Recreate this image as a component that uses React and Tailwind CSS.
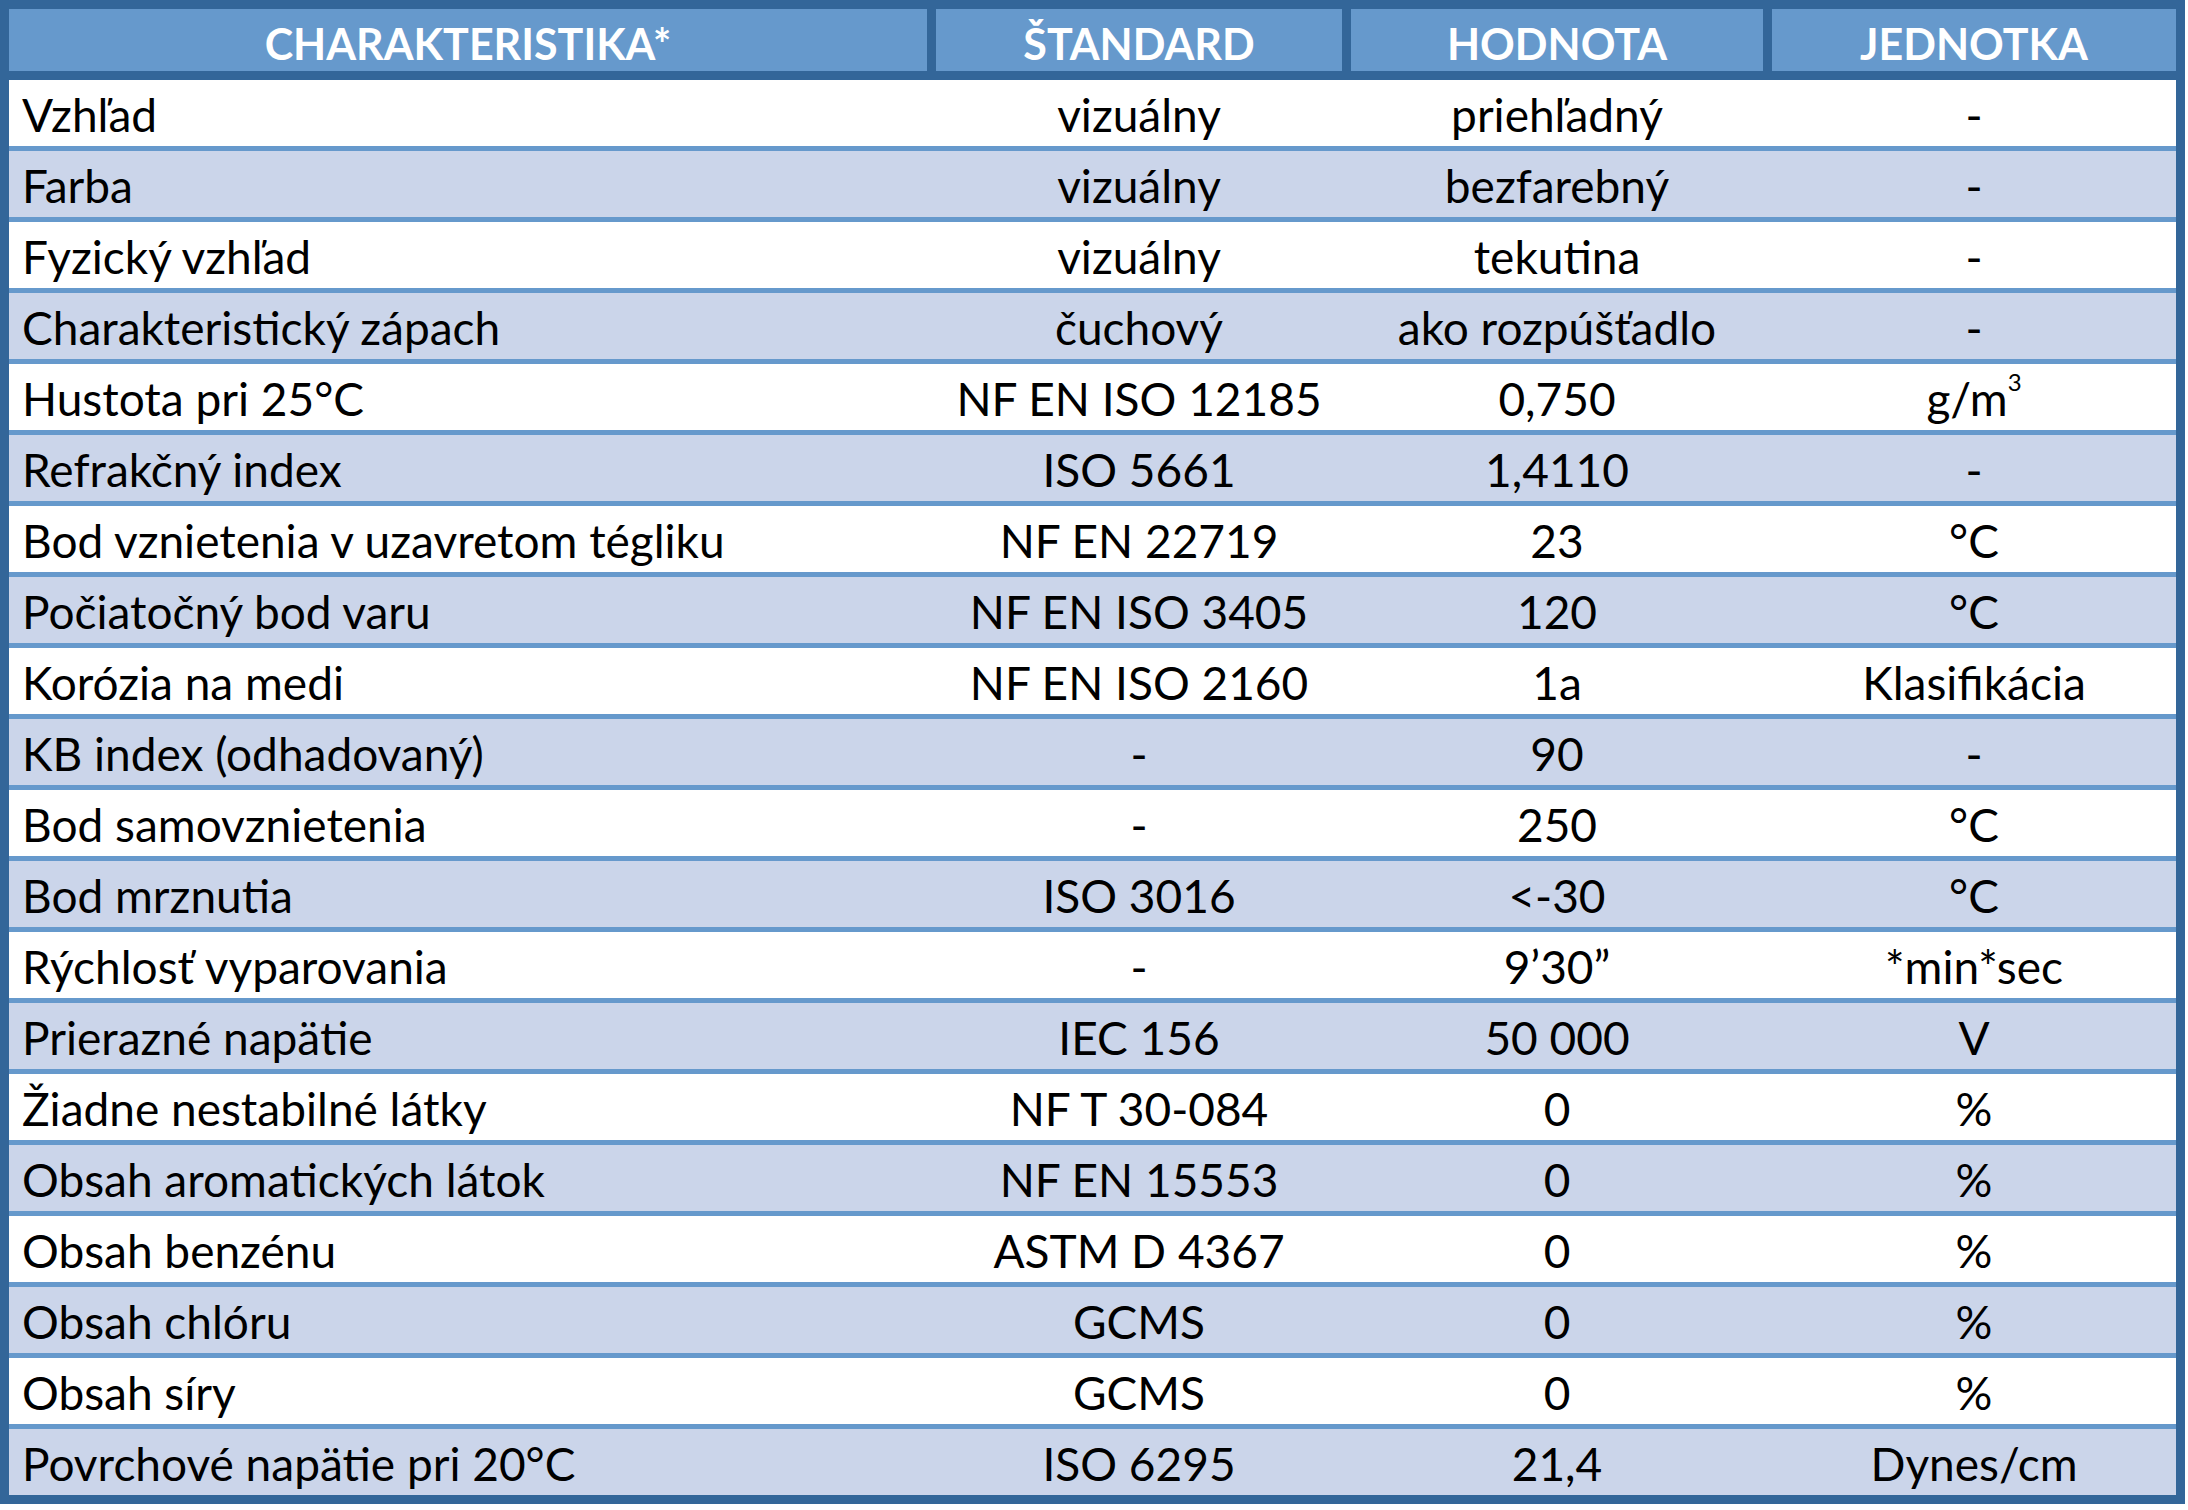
const headers = ['CHARAKTERISTIKA*', 'ŠTANDARD', 'HODNOTA', 'JEDNOTKA'];

const rows = [
  ['Vzhľad', 'vizuálny', 'priehľadný', '-'],
  ['Farba', 'vizuálny', 'bezfarebný', '-'],
  ['Fyzický vzhľad', 'vizuálny', 'tekutina', '-'],
  ['Charakteristický zápach', 'čuchový', 'ako rozpúšťadlo', '-'],
  ['Hustota pri 25°C', 'NF EN ISO 12185', '0,750', 'g/m3'],
  ['Refrakčný index', 'ISO 5661', '1,4110', '-'],
  ['Bod vznietenia v uzavretom tégliku', 'NF EN 22719', '23', '°C'],
  ['Počiatočný bod varu', 'NF EN ISO 3405', '120', '°C'],
  ['Korózia na medi', 'NF EN ISO 2160', '1a', 'Klasifikácia'],
  ['KB index (odhadovaný)', '-', '90', '-'],
  ['Bod samovznietenia', '-', '250', '°C'],
  ['Bod mrznutia', 'ISO 3016', '<-30', '°C'],
  ['Rýchlosť vyparovania', '-', '9’30”', '*min*sec'],
  ['Prierazné napätie', 'IEC 156', '50 000', 'V'],
  ['Žiadne nestabilné látky', 'NF T 30-084', '0', '%'],
  ['Obsah aromatických látok', 'NF EN 15553', '0', '%'],
  ['Obsah benzénu', 'ASTM D 4367', '0', '%'],
  ['Obsah chlóru', 'GCMS', '0', '%'],
  ['Obsah síry', 'GCMS', '0', '%'],
  ['Povrchové napätie pri 20°C', 'ISO 6295', '21,4', 'Dynes/cm'],
];

const cols = 'grid grid-cols-[918px_406px_412px_404px] gap-x-[9px]';

function Unit({ value }) {
  if (value === 'g/m3') {
    return (
      <span className="flex items-start">
        g/m<span className="text-[24px] leading-none -mt-[6px]">3</span>
      </span>
    );
  }
  return value;
}

export default function App() {
  return (
    <div className="bg-white w-[2188px] h-[1510px] font-['Lato',sans-serif]">
      <div className="w-[2185px] bg-[#336699] p-[9px]">
        {/* Header */}
        <div className={`${cols} h-[62px] mb-[9px]`}>
          {headers.map((h) => (
            <div
              key={h}
              className="bg-[#6699cc] flex items-center justify-center pt-[6px] text-white font-bold text-[43px] leading-none"
            >
              {h}
            </div>
          ))}
        </div>

        {/* Body */}
        <div className="bg-[#6699cc] flex flex-col gap-[5px]">
          {rows.map((r, i) => (
            <div
              key={r[0]}
              className={`${cols} h-[66px] pt-[4px] text-black text-[46px] leading-none ${
                i % 2 === 0 ? 'bg-white' : 'bg-[#cbd5ea]'
              }`}
            >
              <div className="flex items-center pl-[13px] whitespace-nowrap">{r[0]}</div>
              <div className="flex items-center justify-center whitespace-nowrap">{r[1]}</div>
              <div className="flex items-center justify-center whitespace-nowrap">{r[2]}</div>
              <div className="flex items-center justify-center whitespace-nowrap">
                <Unit value={r[3]} />
              </div>
            </div>
          ))}
        </div>
      </div>
    </div>
  );
}
